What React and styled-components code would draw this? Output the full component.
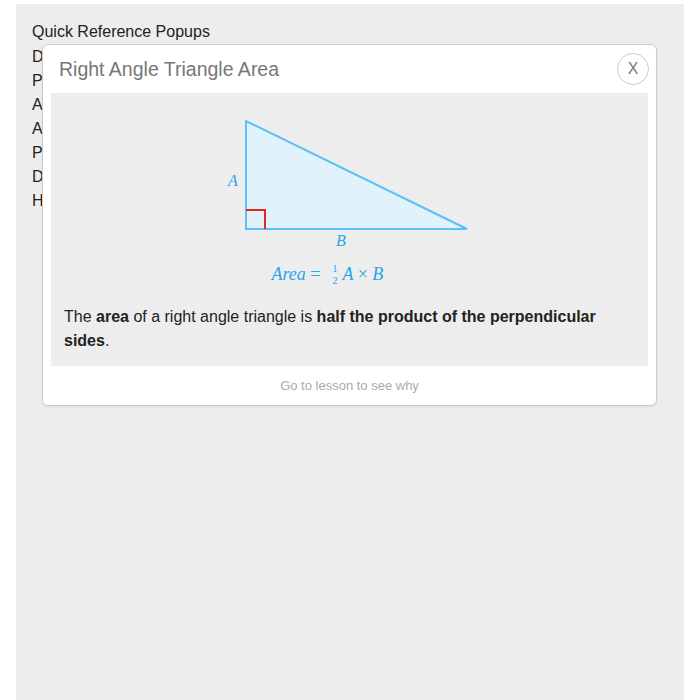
import React from 'react';
import styled, { createGlobalStyle } from 'styled-components';

const GlobalStyle = createGlobalStyle`
  html, body {
    margin: 0;
    padding: 0;
    background: #ffffff;
  }
  body {
    font-family: "Liberation Sans", Arial, sans-serif;
    color: #222222;
  }
`;

const Panel = styled.div`
  position: relative;
  margin: 4px 16px 0 16px;
  min-height: 696px;
  padding: 7px 16px;
  background: #ededed;
  font-size: 16px;
  line-height: 24px;
`;

const PanelTitle = styled.div`
  margin: 9px 0 0 0;
`;

const RefList = styled.ul`
  list-style: none;
  margin: 1px 0 0 0;
  padding: 0;
`;

const RefItem = styled.li`
  margin: 0;
`;

const Popup = styled.div`
  position: absolute;
  left: 26px;
  top: 40px;
  width: 613px;
  background: #ffffff;
  border: 1px solid #cccccc;
  border-radius: 6px;
  box-shadow: 0 1px 2px rgba(0, 0, 0, 0.08);
`;

const PopupHeader = styled.header`
  display: flex;
  align-items: center;
  justify-content: space-between;
  height: 48px;
  padding: 0 7px 0 16px;
`;

const PopupTitle = styled.h3`
  margin: 0;
  font-size: 19.5px;
  font-weight: 400;
  color: #777777;
`;

const CloseButton = styled.button`
  width: 32px;
  height: 32px;
  border-radius: 50%;
  border: 1px solid #cccccc;
  background: #ffffff;
  color: #777777;
  font-family: "Liberation Sans", Arial, sans-serif;
  font-size: 16px;
  line-height: 30px;
  padding: 0;
  text-align: center;
`;

const PopupBody = styled.div`
  margin: 0 8px;
  background: #ededed;
  padding: 17px 0 13px 0;
`;

const Figure = styled.div`
  width: 300px;
  margin: 0 auto;
`;

const Formula = styled.div`
  margin-top: 4px;
  padding-left: 72px;
  font-family: "Liberation Serif", "Times New Roman", serif;
  font-style: italic;
  font-size: 18px;
  line-height: 26px;
  color: #29a3ea;
  display: flex;
  align-items: center;
  white-space: pre;
`;

const Upright = styled.span`
  font-style: normal;
`;

const Fraction = styled.span`
  display: inline-flex;
  flex-direction: column;
  align-items: center;
  font-style: normal;
  font-size: 10px;
  line-height: 12px;
  margin: 1px 5px 0 12px;
`;

const Description = styled.p`
  margin: 18px 13px 0 13px;
  font-size: 16px;
  line-height: 24px;
  color: #222222;
`;

const PopupFooter = styled.footer`
  height: 39px;
  display: flex;
  align-items: center;
  justify-content: center;
  font-size: 13px;
  color: #aaaaaa;
`;

const items = [
  'Distance Between Two Points',
  'Pythagoras Theorem',
  'Area of a Circle',
  'Area of a Trapezium',
  'Perimeter of a Rectangle',
  'Degrees to Radians',
  "Heron's Formula",
];

const Triangle = () => (
  <svg width="300" height="140" viewBox="0 0 300 140">
    <polygon
      points="46,11 46,119 267,119"
      fill="#e0f3fc"
      stroke="#5bc0f8"
      strokeWidth="2"
      strokeLinejoin="miter"
    />
    <polyline points="46,100 65,100 65,119" fill="none" stroke="#e8261c" strokeWidth="2" />
    <text x="28" y="76" fill="#29a3ea" fontFamily="Liberation Serif, serif" fontStyle="italic" fontSize="16">
      A
    </text>
    <text x="136" y="136" fill="#29a3ea" fontFamily="Liberation Serif, serif" fontStyle="italic" fontSize="16">
      B
    </text>
  </svg>
);

const App = () => {
  return (
    <>
      <GlobalStyle />
      <Panel>
        <PanelTitle>Quick Reference Popups</PanelTitle>
        <RefList>
          {items.map((item) => (
            <RefItem key={item}>{item}</RefItem>
          ))}
        </RefList>
        <Popup>
          <PopupHeader>
            <PopupTitle>Right Angle Triangle Area</PopupTitle>
            <CloseButton>X</CloseButton>
          </PopupHeader>
          <PopupBody>
            <Figure>
              <Triangle />
              <Formula>
                Area <Upright>=</Upright>
                <Fraction>
                  <span>1</span>
                  <span>2</span>
                </Fraction>
                A <Upright>×</Upright> B
              </Formula>
            </Figure>
            <Description>
              The <b>area</b> of a right angle triangle is <b>half the product of the perpendicular sides</b>.
            </Description>
          </PopupBody>
          <PopupFooter>Go to lesson to see why</PopupFooter>
        </Popup>
      </Panel>
    </>
  );
};

export default App;
